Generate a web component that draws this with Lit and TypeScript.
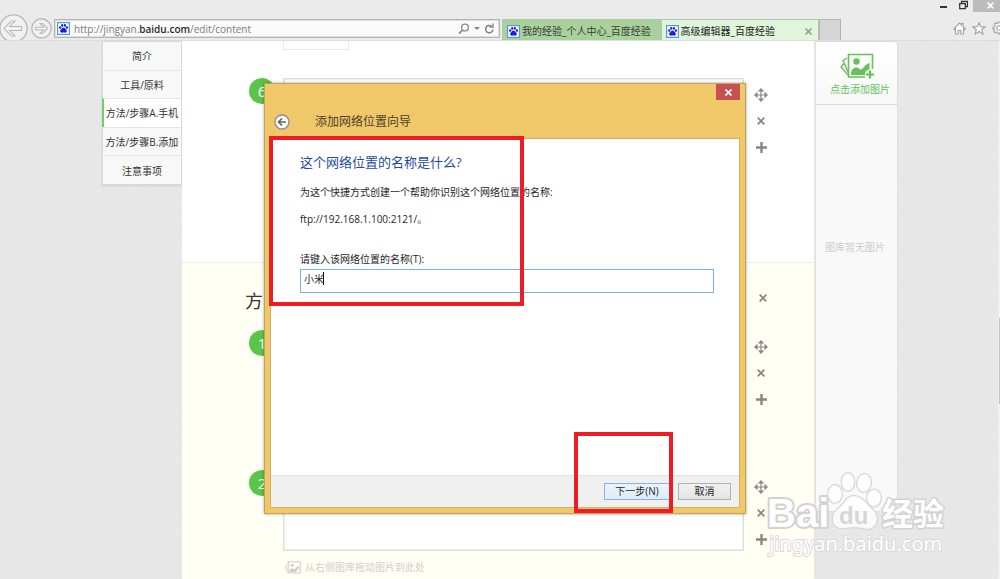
import { LitElement, html, css, svg } from "lit";
import { customElement, property } from "lit/decorators.js";

const favicon = html`<svg class="favicon" viewBox="0 0 13 13" width="13" height="13" aria-hidden="true">
  <rect x=".6" y=".6" width="11.800" height="11.800" fill="#fff" stroke="#4a9be6" stroke-width="1.200"></rect>
  <g fill="#2319dc">
    <ellipse cx="3.200" cy="5.600" rx="1.100" ry="1.400"></ellipse>
    <ellipse cx="5.200" cy="3.400" rx="1.100" ry="1.400"></ellipse>
    <ellipse cx="7.900" cy="3.400" rx="1.100" ry="1.400"></ellipse>
    <ellipse cx="9.900" cy="5.600" rx="1.100" ry="1.400"></ellipse>
    <path d="M6.500 5.400c1.400 0 1.800 1.300 2.700 2.100 1.100 1 .9 3.200-.8 3.200-.7 0-1.200-.2-1.900-.2s-1.200.2-1.900.2c-1.700 0-1.900-2.200-.8-3.200.9-.8 1.300-2.100 2.700-2.100z"></path>
  </g>
</svg>`;

const icons = {
  back: html`<svg width="29" height="29" viewBox="0 0 29 29" fill="none" stroke="#b9b9b9">
    <circle cx="14.500" cy="14.500" r="13.600" fill="#f1f1f1" stroke-width="1.400"></circle>
    <path d="M5 14.500l7.500-7.500h3.500l-5.500 5.700h12v3.600h-12l5.500 5.700h-3.500z" fill="#fbfbfb" stroke-width="1.200"></path></svg>`,
  forward: html`<svg width="21" height="21" viewBox="0 0 21 21" fill="none" stroke="#b9b9b9">
    <circle cx="10.500" cy="10.500" r="9.700" fill="#f1f1f1" stroke-width="1.400"></circle>
    <path d="M16.500 10.500l-5-5H9l3.500 3.700H4.500v2.600h8L9 15.500h2.500z" fill="#fbfbfb" stroke-width="1.100"></path></svg>`,
  search: html`<svg width="12" height="12" viewBox="0 0 12 12" fill="none" stroke="#8a8a8a">
    <circle cx="7" cy="4.500" r="3.400" stroke-width="1.400"></circle><path d="M4.500 7L1 10.700" stroke-width="1.800"></path></svg>`,
  refresh: html`<svg width="11" height="12" viewBox="0 0 11 12" fill="none" stroke="#808080" stroke-width="1.500">
    <path d="M7.500 3.200A3.700 3.700 0 1 0 9 6.500"></path><path d="M5.500 4h3.500V.500" stroke-width="1.400"></path></svg>`,
  home: html`<svg width="13" height="13" viewBox="0 0 13 13" fill="#fbfbfb" stroke="#a3a3a3" stroke-width="1.100">
    <path d="M.8 6.800L6.500 1l2 2V1.500h1.500v3l2.300 2.300-.9.900-.9-.8V12H7.800V8.500H5.200V12H2.500V6.900l-.8.800z"></path></svg>`,
  star: html`<svg width="14" height="13" viewBox="0 0 14 13" fill="#fbfbfb" stroke="#a3a3a3" stroke-width="1.100">
    <path d="M7 .8l1.700 4h4.500L9.700 7.500l1.300 4.700L7 9.500l-4 2.700 1.300-4.700L.8 4.800h4.500z"></path></svg>`,
  gear: html`<svg width="14" height="14" viewBox="0 0 14 14" fill="#fbfbfb" stroke="#a3a3a3" stroke-width="1.100">
    <path d="M6 1h2l.3 1.700 1.200.5 1.500-1 1.300 1.400-1 1.400.5 1.200L13 6v2l-1.700.3-.5 1.200 1 1.500-1.400 1.300-1.400-1-1.200.5L8 13H6l-.3-1.700-1.200-.5-1.500 1L1.700 10.400l1-1.400-.5-1.200L1 8V6l1.700-.3.5-1.200-1-1.500L3.600 1.700l1.400 1 .8-.4z"></path>
    <circle cx="7" cy="7" r="2.200"></circle></svg>`,
  move: html`<svg width="14" height="14" viewBox="0 0 14 14" fill="#878787">
    <path d="M7 0l3.200 3.500H7.600v2.900h2.900V3.800L14 7l-3.500 3.200V7.600H7.600v2.900h2.600L7 14l-3.200-3.500h2.600V7.600H3.500v2.600L0 7l3.500-3.200v2.600h2.900V3.500H3.800z"></path></svg>`,
  remove: html`<svg width="8" height="8" viewBox="0 0 8 8" stroke="#858585" stroke-width="1.700"><path d="M.7.700l6.600 6.600M7.300.700L.7 7.300"></path></svg>`,
  add: html`<svg width="11" height="11" viewBox="0 0 11 11" fill="#858585"><path d="M4.300 0h2.400v4.300H11v2.400H6.700V11H4.300V6.700H0V4.300h4.300z"></path></svg>`,
};

const gallery = (w: number, h: number, plus: boolean) => html`<svg width=${w} height=${h} viewBox="0 0 34 26" fill="none" stroke="currentColor" aria-hidden="true">
  <path d="M7 5L3 7.500l5 11.500M4.500 10L1 14l7 8" stroke-width="1.400"></path>
  ${plus
    ? svg`<path d="M25 24H8.500V1.500h24V16" stroke-width="1.600"></path><path d="M30 17.500v8M26 21.500h8" stroke-width="2.200"></path>`
    : svg`<path d="M8.500 1.500h24V24h-24z" stroke-width="2.200"></path>`}
  <circle cx="16.500" cy="8.500" r="3.200" fill="currentColor" stroke="none"></circle>
  <path d="M11 22v-2.500c1.500-5 6-6.500 9-3 3 .8 4.500-5.500 9.500-6.500v6.500c-3.500.5-4.500 2.500-4.500 5.500z" fill="currentColor" stroke="none"></path>
</svg>`;

const textFont = css`"Open Sans", "Noto Sans CJK SC", sans-serif`;

const controls = css`
  * { box-sizing: border-box; }
  button { font: inherit; color: inherit; background: none; border: 0; padding: 0; margin: 0; display: flex; align-items: center; justify-content: center; }
  a { color: inherit; text-decoration: none; }
  svg { display: block; flex: none; }
`;

@customElement("browser-bar")
export class BrowserBar extends LitElement {
  static styles = [controls, css`
    :host { display: block; height: 41px; background: #ebebeb; border-bottom: 1px solid #dcdcdc; overflow: hidden; color: #3c3c3c; }
    .window { display: flex; justify-content: flex-end; align-items: flex-start; height: 19px; }
    .window button { width: 20px; height: 12px; }
    .window .close { width: 27px; background: #bcbcbc; justify-content: flex-start; padding: 0 0 2px 14px; }
    .window .restore { height: 10px; }
    .tools { display: flex; height: 22px; align-items: flex-start; }
    .nav { display: flex; align-items: center; width: 55px; height: 19px; gap: 3px; margin-left: -1px; }
    .address { flex: 0 1 446px; height: 19px; display: flex; align-items: center; gap: 4px; border: 1px solid #b4b4b4; background: #fafafa; padding: 0 4px 0 2px; outline: 1px solid #dedede; outline-offset: -2px; }
    .url { flex: 1; min-width: 0; color: #7b7b7b; font-size: 10px; line-height: 16px; white-space: nowrap; overflow: hidden; }
    .url b { font-weight: 600; color: #2c2c2c; }
    .caret { border: 3px solid transparent; border-top-color: #858585; border-bottom: 0; }
    .tabs { flex: 0 1 339px; display: flex; height: 22px; margin-left: 2px; }
    .tab { flex: 1 1 159px; min-width: 0; display: flex; align-items: center; gap: 2px; padding: 1px 6px 0 4px; border: 1px solid #b4c6ad; border-bottom: 0; background: #a9d19b; font-size: 10px; line-height: 18px; }
    .tab a { flex: 1; overflow: hidden; white-space: nowrap; }
    .tab.on { background: #dff6da; color: #222; }
    .new { flex: 0 0 22px; background: #d5d5d5; border: 1px solid #b5b5b5; border-bottom: 0; }
    .extras { margin-left: auto; display: flex; gap: 6px; padding-top: 2px; margin-right: -6px; }
  `];
  render() {
    return html`
      <div class="window">
        <button aria-label="最小化"><svg width="7" height="12" viewBox="0 0 7 12"><path d="M0 7h7" stroke="#333" stroke-width="2"></path></svg></button>
        <button class="restore" aria-label="还原"><svg width="9" height="10" viewBox="0 0 9 10" fill="none" stroke="#333"><path d="M2.500 3V1.500h6v5H7" stroke-width="1.300"></path><path d="M.7 3.700h5.600v5H.7z" stroke-width="1.300"></path></svg></button>
        <button class="close" aria-label="关闭"><svg width="7" height="7" viewBox="0 0 7 7" stroke="#fff" stroke-width="1.600"><path d="M.6.600l5.800 5.800M6.400.600L.6 6.400"></path></svg></button>
      </div>
      <div class="tools">
        <div class="nav"><button aria-label="后退">${icons.back}</button><button aria-label="前进">${icons.forward}</button></div>
        <div class="address">
          ${favicon}
          <a class="url" href="#">http://jingyan.<b>baidu.com</b>/edit/content</a>
          <button aria-label="搜索">${icons.search}</button><i class="caret"></i><button aria-label="刷新">${icons.refresh}</button>
        </div>
        <div class="tabs">
          <div class="tab">${favicon}<a href="#">我的经验_个人中心_百度经验</a></div>
          <div class="tab on">${favicon}<a href="#">高级编辑器_百度经验</a><button aria-label="关闭标签页"><svg width="7" height="7" viewBox="0 0 7 7" stroke="#8b9b88" stroke-width="1.500"><path d="M.5.500l6 6M6.500.500l-6 6"></path></svg></button></div>
          <button class="new" aria-label="新建标签页"></button>
        </div>
        <div class="extras"><button aria-label="主页">${icons.home}</button><button aria-label="收藏">${icons.star}</button><button aria-label="工具">${icons.gear}</button></div>
      </div>`;
  }
}

@customElement("edit-step")
export class EditStep extends LitElement {
  @property() number = "";
  @property({ type: Boolean }) hint = false;
  static styles = [controls, css`
    :host { display: grid; grid-template-columns: 34px 461px 34px; min-height: 140px; align-items: start; }
    .number { width: 26px; height: 26px; border-radius: 13px; background: #5bc54a; color: #fff; font-size: 15px; line-height: 26px; text-align: center; }
    .box { display: block; width: 100%; height: 81px; resize: none; border: 1px solid #ddd; outline: 1px solid #f0f0f0; outline-offset: -2px; background: #fff; }
    .hint { display: flex; align-items: center; gap: 4px; padding: 8px 0 0 1px; color: #cfcfcf; font-size: 10px; line-height: 16px; }
    .actions { display: grid; grid-template-rows: 27px 26px 26px; padding-top: 3px; }
  `];
  render() {
    return html`
      <div class="number">${this.number}</div>
      <div>
        <textarea class="box" aria-label="步骤内容"></textarea>
        ${this.hint ? html`<div class="hint">${gallery(17, 13, false)}从右侧图库拖动图片到此处</div>` : ""}
      </div>
      <div class="actions">
        <button aria-label="移动">${icons.move}</button>
        <button aria-label="删除">${icons.remove}</button>
        <button aria-label="添加">${icons.add}</button>
      </div>`;
  }
}

@customElement("location-wizard")
export class LocationWizard extends LitElement {
  static styles = [controls, css`
    :host { display: flex; flex-direction: column; background: #f0c869; border: 1px solid #c4a25a; padding: 0 5px 5px; box-shadow: 0 0 3px rgba(0, 0, 0, .35); color: #1e1e1e; font-size: 10px; }
    .top { display: flex; justify-content: flex-end; height: 16px; }
    .close { width: 24px; background: #c75050; }
    .title { display: flex; align-items: center; gap: 25px; height: 38px; padding: 6px 0 0 4px; font-size: 12px; line-height: 18px; color: #4a432f; }
    .pane { flex: 1; display: flex; flex-direction: column; background: #fff; border: 1px solid #d3b063; }
    .body { flex: 1; padding: 13px 25px 0 29px; }
    h2 { margin: 0 0 12px; font-size: 13px; line-height: 20px; font-weight: 400; color: #1f4aa3; }
    p { margin: 0 0 11px; line-height: 16px; }
    label { display: block; margin-top: 24px; line-height: 16px; }
    .field { position: relative; margin-top: 2px; }
    input { display: block; width: 100%; height: 24px; padding: 0 3px 5px; border: 1px solid #79b1e8; border-radius: 0; outline: 0; background: #fff; color: #1e1e1e; caret-color: transparent; font: inherit; }
    .caret { position: absolute; left: 23px; top: 3px; width: 1px; height: 13px; background: #111; }
    .foot { display: flex; justify-content: flex-end; gap: 8px; height: 32px; padding: 7px 8px 0 0; background: #f0f0f0; border-top: 1px solid #dfdfdf; }
    .foot button { width: 53px; height: 17px; border: 1px solid #b2b2b2; background: linear-gradient(#f1f1f1, #e4e4e4); line-height: 15px; }
    .foot .next { width: 66px; border-color: #84b5e6; background: linear-gradient(#ebf4fd, #dcecfc); }
  `];
  render() {
    return html`
      <div class="top"><button class="close" aria-label="关闭"><svg width="7" height="7" viewBox="0 0 7 7" stroke="#fff" stroke-width="1.600"><path d="M.5.500l6 6M6.500.500l-6 6"></path></svg></button></div>
      <div class="title">
        <button aria-label="返回"><svg width="16" height="16" viewBox="0 0 16 16" fill="none"><circle cx="8" cy="8" r="7" fill="#fff" stroke="#8f8f8f" stroke-width="1.400"></circle><path d="M12 8H5M8 4.500L4.500 8 8 11.500" stroke="#666" stroke-width="1.700"></path></svg></button>
        <span>添加网络位置向导</span>
      </div>
      <div class="pane">
        <div class="body">
          <h2>这个网络位置的名称是什么?</h2>
          <p>为这个快捷方式创建一个帮助你识别这个网络位置的名称:</p>
          <p>ftp://192.168.1.100:2121/。</p>
          <label for="name">请键入该网络位置的名称(T):</label>
          <div class="field"><input id="name" value="小米"><i class="caret"></i></div>
        </div>
        <div class="foot"><button class="next">下一步(N)</button><button>取消</button></div>
      </div>`;
  }
}

@customElement("site-watermark")
export class SiteWatermark extends LitElement {
  static styles = css`
    svg { display: block; }
    .mark { fill: #fff; fill-opacity: .8; stroke: #d2d2d2; stroke-width: 2; paint-order: stroke; stroke-linejoin: round; }
    .latin { font: 700 40px "Liberation Sans", sans-serif; fill-opacity: 1; stroke-width: 4; }
    .du { font: 700 24px "Liberation Sans", sans-serif; fill: #cdcdcd; stroke: none; }
    .cjk { font: 700 31px "Noto Sans CJK SC", sans-serif; fill-opacity: 1; stroke-width: 3; }
    .site { font: 400 20px "Noto Sans", sans-serif; fill-opacity: 1; stroke: #dadada; }
  `;
  render() {
    return html`<svg width="184" height="88" viewBox="0 0 184 88" role="img" aria-label="Baidu 经验">
      <text class="mark latin" x="0" y="56">Bai</text>
      <g class="mark">
        <ellipse cx="68" cy="23" rx="7" ry="9"></ellipse>
        <ellipse cx="81" cy="11" rx="6.500" ry="9"></ellipse>
        <ellipse cx="97" cy="12" rx="7" ry="9" transform="rotate(8 97 12)"></ellipse>
        <ellipse cx="107" cy="27" rx="7" ry="8.500"></ellipse>
        <path d="M87 25c8 0 12 7 17 12 6 5 7 10 5 15-2 6-8 7-13 5-6-1-12-1-18 0-6 1-11-1-12-7-1-7 2-10 7-14 5-5 7-11 14-11z"></path>
      </g>
      <text class="mark du" x="72" y="53">du</text>
      <text class="mark cjk" x="115" y="54">经验</text>
      <text class="mark site" x="2" y="80">jingyan.baidu.com</text>
    </svg>`;
  }
}

@customElement("app-root")
export class AppRoot extends LitElement {
  static styles = [controls, css`
    :host { display: flex; flex-direction: column; position: relative; height: 100vh; overflow: hidden; font-family: ${textFont}; color: #333; }
    .page { flex: 1; min-height: 0; overflow: hidden; display: grid; grid-template-columns: 80px 633px 83px; justify-content: center; align-items: start;
      background: repeating-linear-gradient(45deg, rgba(255, 255, 255, .14) 0 1px, transparent 1px 3px), #e6e6e6; }
    nav { display: flex; flex-direction: column; height: 144px; background: #f8f8f8; border: 1px solid #dadada; box-shadow: 0 1px 2px rgba(0, 0, 0, .1); font-size: 10px; }
    nav a { flex: 1; display: flex; align-items: center; justify-content: center; white-space: nowrap; }
    nav a + a { border-top: 1px solid #e5e5e5; }
    nav .on { background: #fff; box-shadow: -1px 0 #6fd066, inset 1px 0 #6fd066; }
    main { background: #fff; border-right: 1px solid #e3e3e3; }
    section { padding-left: 67px; }
    .first { height: 221px; }
    .upload { width: 66px; height: 9px; margin: 0 0 28px 34px; border: 1px solid #e9e9e9; border-top: 0; }
    .second { background: #fffff4; border-top: 1px solid #ededed; }
    .heading { display: flex; align-items: center; justify-content: space-between; width: 518px; height: 67px; padding-top: 8px; }
    h1 { margin: 0 0 0 -4px; font-size: 18px; line-height: 28px; font-weight: 400; }
    .heading button { margin-bottom: 6px; }
    aside { height: calc(100vh - 108px); background: #f9f9f9; border-left: 1px solid #e3e3e3; border-right: 1px solid #dedede; border-bottom: 1px solid #e0e0e0; border-radius: 0 4px 0 0; font-size: 10px; line-height: 16px; text-align: center; }
    .insert { flex-direction: column; gap: 2px; width: 100%; height: 64px; padding: 3px 0 0 7px; color: #65c158; background: linear-gradient(#fff, #f8f8f8); border-bottom: 1px solid #dcdcdc; border-top: 1px solid #ddd; border-radius: 0 4px 0 0; }
    .insert svg { margin-right: 6px; }
    .empty { margin: 134px 0 0; padding-right: 3px; color: #cdcdcd; }
    .scroll { position: absolute; right: 0; top: 41px; bottom: 0; width: 2px; padding: 277px 0 0 1px; background: #f1f1f1; }
    .thumb { height: 86px; background: #c2c2c2; }
    location-wizard { position: absolute; left: 264px; top: 83px; width: 482px; height: 431px; }
    .ring { position: absolute; border: 4px solid #ee1c25; pointer-events: none; }
    .name-ring { left: 269px; top: 136px; width: 255px; height: 170px; }
    .next-ring { left: 574px; top: 432px; width: 99px; height: 81px; }
    site-watermark { position: absolute; right: 49px; bottom: 20px; pointer-events: none; }
  `];
  render() {
    const items = ["简介", "工具/原料", "方法/步骤A.手机", "方法/步骤B.添加", "注意事项"];
    return html`
      <browser-bar></browser-bar>
      <div class="page">
        <nav>${items.map((t, i) => html`<a href="#" class=${i === 2 ? "on" : ""}>${t}</a>`)}</nav>
        <main>
          <section class="first">
            <div class="upload"></div>
            <edit-step number="6"></edit-step>
          </section>
          <section class="second">
            <div class="heading"><h1>方法/步骤</h1><button aria-label="删除">${icons.remove}</button></div>
            <edit-step number="1"></edit-step>
            <edit-step number="2" hint></edit-step>
          </section>
        </main>
        <aside>
          <button class="insert">${gallery(34, 26, true)}<span>点击添加图片</span></button>
          <p class="empty">图库暂无图片</p>
        </aside>
      </div>
      <div class="scroll"><div class="thumb"></div></div>
      <location-wizard></location-wizard>
      <div class="ring name-ring"></div>
      <div class="ring next-ring"></div>
      <site-watermark></site-watermark>`;
  }
}
